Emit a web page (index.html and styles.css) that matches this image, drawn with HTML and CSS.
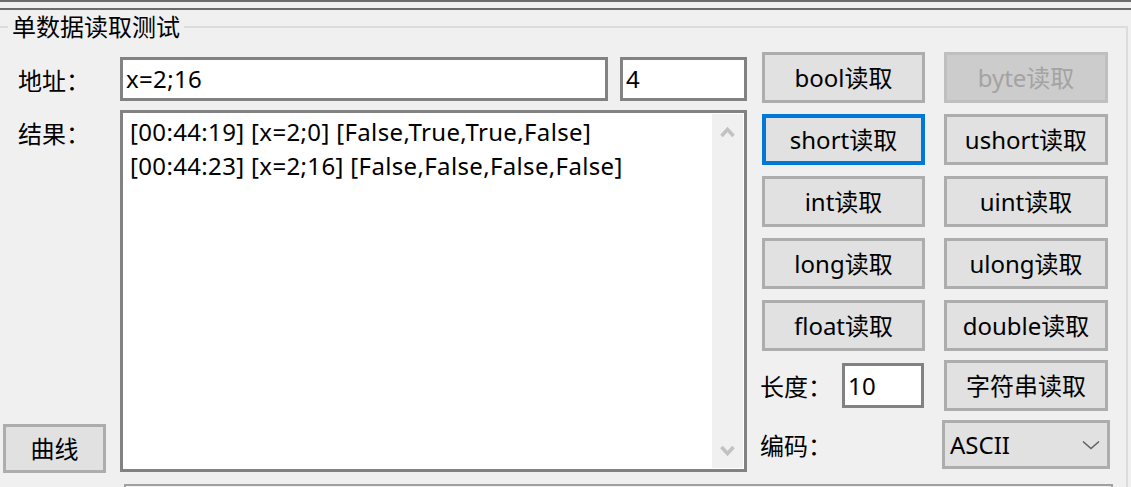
FILE: index.html
```html
<!DOCTYPE html>
<html lang="zh-CN">
<head>
<meta charset="utf-8">
<title>单数据读取测试</title>
<link rel="stylesheet" href="styles.css">
</head>
<body>
<div class="chrome"></div>
<fieldset class="group">
  <legend class="group-title">单数据读取测试</legend>
  <div class="group-body">
    <div class="main">
      <div class="left">
        <div class="lbl lbl-addr">地址：</div>
        <div class="addr">
          <div class="tb tb-addr">x=2;16</div>
          <div class="tb tb-len">4</div>
        </div>
        <div class="side">
          <div class="lbl lbl-result">结果：</div>
          <button class="btn btn-curve" type="button">曲线</button>
        </div>
        <div class="result">
          <div class="result-text">
            <div class="line">[00:44:19] [x=2;0] [False,True,True,False]</div>
            <div class="line">[00:44:23] [x=2;16] [False,False,False,False]</div>
          </div>
          <div class="vscroll">
            <svg class="arrow" width="15" height="12" viewBox="0 0 15 12"><polyline points="1.5,10 7.5,3.5 13.5,10" fill="none" stroke="#c2c2c2" stroke-width="3.6" stroke-linejoin="miter"/></svg>
            <svg class="arrow" width="15" height="12" viewBox="0 0 15 12"><polyline points="1.5,2 7.5,8.5 13.5,2" fill="none" stroke="#c2c2c2" stroke-width="3.6" stroke-linejoin="miter"/></svg>
          </div>
        </div>
      </div>
      <div class="right">
        <div class="btns">
          <button class="btn" type="button">bool读取</button>
          <button class="btn btn-disabled" type="button" disabled>byte读取</button>
          <button class="btn btn-focus" type="button">short读取</button>
          <button class="btn" type="button">ushort读取</button>
          <button class="btn" type="button">int读取</button>
          <button class="btn" type="button">uint读取</button>
          <button class="btn" type="button">long读取</button>
          <button class="btn" type="button">ulong读取</button>
          <button class="btn" type="button">float读取</button>
          <button class="btn" type="button">double读取</button>
        </div>
        <div class="opts">
          <div class="opt-cell">
            <span class="lbl-opt">长度：</span>
            <div class="tb tb-num">10</div>
          </div>
          <button class="btn" type="button">字符串读取</button>
          <div class="opt-cell">
            <span class="lbl-opt">编码：</span>
          </div>
          <div class="combo">
            <span class="combo-text">ASCII</span>
            <svg class="combo-arrow" width="18" height="10" viewBox="0 0 18 10"><polyline points="1,1.5 9,8.5 17,1.5" fill="none" stroke="#606060" stroke-width="1.6"/></svg>
          </div>
        </div>
      </div>
    </div>
    <div class="lower-box"></div>
  </div>
</fieldset>
</body>
</html>
```

FILE: styles.css
```css
html, body {
  margin: 0;
  padding: 0;
}

body {
  width: 1131px;
  height: 487px;
  overflow: hidden;
  background: #f0f0f0;
  color: #000;
  font-family: "Noto Sans", "Noto Sans CJK SC", sans-serif;
  font-size: 24px;
}

.chrome {
  height: 6px;
  border-top: 2px solid #6b6b6b;
  border-bottom: 2px solid #6b6b6b;
}

.group {
  margin: 2px 3px 0 -10px;
  padding: 0;
  border: 2px solid #dcdcdc;
  min-width: 0;
}

.group-title {
  margin-left: 16px;
  padding: 0 4px;
  line-height: 30px;
  font-size: 24px;
}

.group-body {
  padding: 10px 0 0 11px;
}

.main {
  display: flex;
  gap: 15px;
}

.left {
  width: 744px;
  margin-top: 5px;
  display: grid;
  grid-template-columns: 117px 1fr;
  grid-template-rows: 44px 362px;
  row-gap: 9px;
}

.lbl {
  padding-left: 15px;
}

.lbl-addr {
  display: flex;
  align-items: center;
}

.addr {
  display: flex;
  gap: 12px;
}

.tb {
  box-sizing: border-box;
  background: #fff;
  border: 3px solid #828282;
  line-height: 38px;
  padding-left: 3px;
  white-space: nowrap;
  letter-spacing: 0.35px;
}

.tb-addr {
  width: 488px;
}

.tb-len {
  flex: 1;
}

.side {
  display: flex;
  flex-direction: column;
}

.lbl-result {
  line-height: 34px;
  margin-top: 7px;
}

.btn {
  box-sizing: border-box;
  margin: 0;
  padding: 0 0 2px;
  background: #e1e1e1;
  border: 3px solid #adadad;
  color: #000;
  font: inherit;
  font-size: 24px;
  display: flex;
  align-items: center;
  justify-content: center;
  white-space: nowrap;
}

.btn-curve {
  margin-top: auto;
  margin-bottom: -1px;
  width: 103px;
  height: 49px;
}

.btn-focus {
  border: 4px solid #0078d7;
}

.btn-disabled {
  background: #cccccc;
  border-color: #bfbfbf;
  color: #a3a3a3;
}

.result {
  box-sizing: border-box;
  display: flex;
  background: #fff;
  border: 3px solid #828282;
}

.result-text {
  flex: 1;
  padding: 2px 0 0 7px;
  line-height: 34px;
  white-space: nowrap;
  overflow: hidden;
  letter-spacing: 0.35px;
}

.vscroll {
  width: 31px;
  margin: 1px;
  background: #f0f0f0;
  display: flex;
  flex-direction: column;
  align-items: center;
  justify-content: space-between;
  padding: 12px 0 11px;
  box-sizing: border-box;
}

.arrow {
  display: block;
}

.right {
  width: 346px;
  display: flex;
  flex-direction: column;
}

.btns {
  display: grid;
  grid-template-columns: 163px 164px;
  grid-auto-rows: 51px;
  column-gap: 19px;
  row-gap: 11px;
}

.opts {
  margin-top: 9px;
  display: grid;
  grid-template-columns: 163px 164px;
  grid-template-rows: 51px 49px;
  column-gap: 19px;
  row-gap: 9px;
}

.opt-cell {
  display: flex;
  align-items: center;
}

.lbl-opt {
  margin-left: -2px;
}

.tb-num {
  margin-left: auto;
  margin-right: 1px;
  width: 82px;
  height: 45px;
  line-height: 39px;
}

.combo {
  box-sizing: border-box;
  margin: 0 -2px;
  background: #e1e1e1;
  border: 3px solid #adadad;
  display: flex;
  align-items: center;
  padding: 0 7px 0 5px;
}

.combo-text {
  flex: 1;
}

.combo-arrow {
  display: block;
}

.lower-box {
  margin: 12px 0 0 121px;
  width: 989px;
  height: 20px;
  box-sizing: border-box;
  border: 2px solid #a0a0a0;
  border-bottom: none;
}
```
